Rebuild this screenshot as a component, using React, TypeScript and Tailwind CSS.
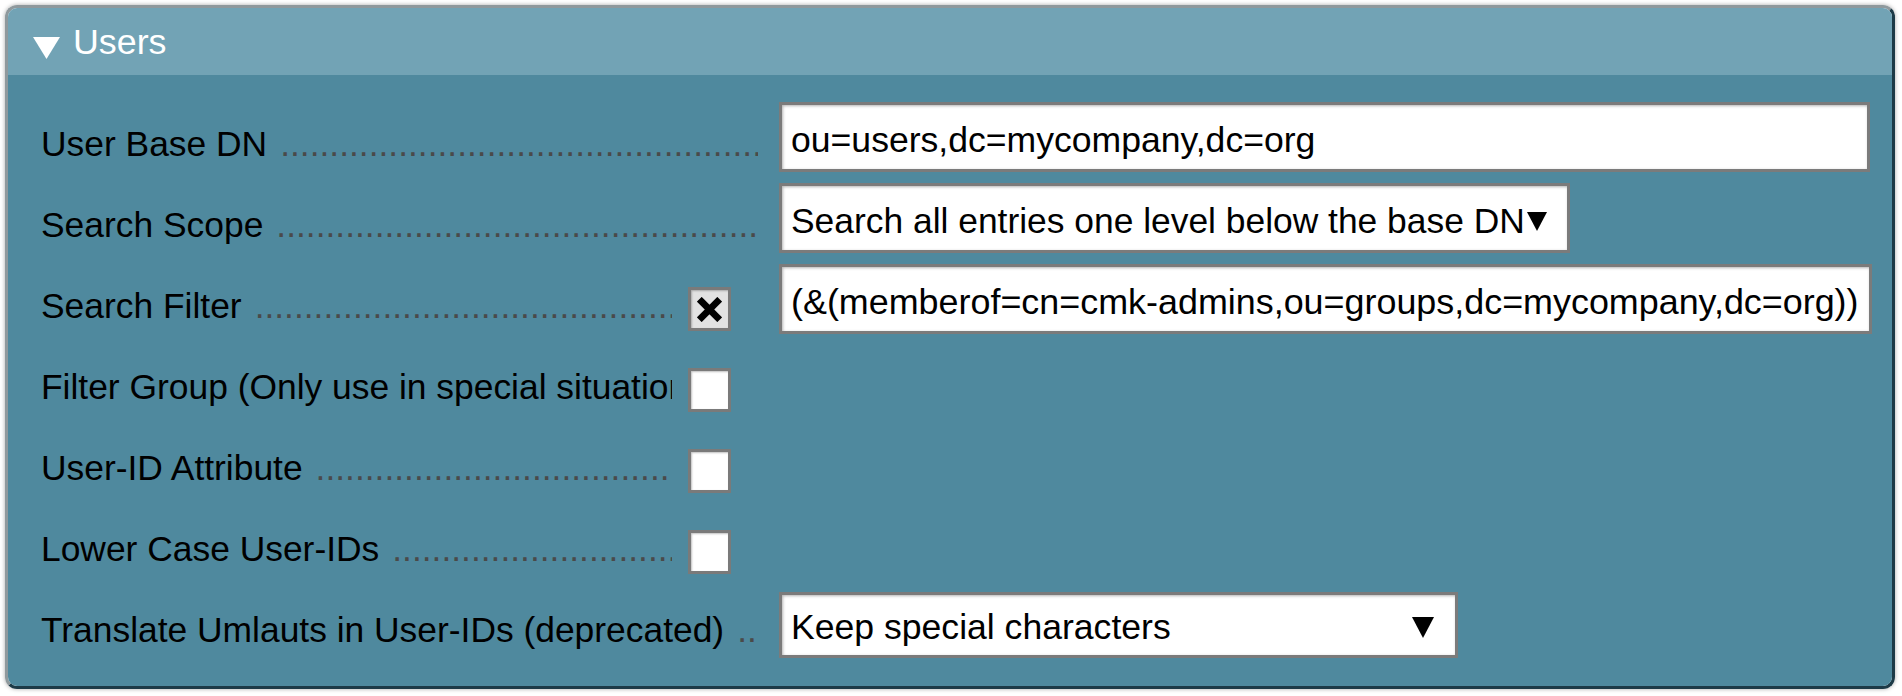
import React from "react";

type Row =
  | { kind: "input"; label: string; value: string; width: string }
  | { kind: "select"; label: string; value: string }
  | { kind: "check"; label: string; checked: boolean; value?: string }
  | { kind: "select2"; label: string; value: string };

const DOTS = ".".repeat(120);

const rows: Row[] = [
  { kind: "input", label: "User Base DN", value: "ou=users,dc=mycompany,dc=org", width: "w-[1091px]" },
  { kind: "select", label: "Search Scope", value: "Search all entries one level below the base DN" },
  {
    kind: "check",
    label: "Search Filter",
    checked: true,
    value: "(&(memberof=cn=cmk-admins,ou=groups,dc=mycompany,dc=org))",
  },
  { kind: "check", label: "Filter Group (Only use in special situations)", checked: false },
  { kind: "check", label: "User-ID Attribute", checked: false },
  { kind: "check", label: "Lower Case User-IDs", checked: false },
  { kind: "select2", label: "Translate Umlauts in User-IDs (deprecated)", value: "Keep special characters" },
];

function Arrow({ className }: { className: string }) {
  return (
    <svg viewBox="0 0 20 19" className={className}>
      <polygon points="0,0 20,0 10,19" fill="black" />
    </svg>
  );
}

function Label({ text, width }: { text: string; width: string }) {
  return (
    <div className={`${width} pt-[22px] flex overflow-hidden whitespace-nowrap leading-[40px] text-[35.4px]`}>
      <span className="text-black shrink-0">{text}</span>
      <span className="pl-[13px] text-[#4a4a4a]">{DOTS}</span>
    </div>
  );
}

function Checkbox({ checked }: { checked: boolean }) {
  return (
    <div
      className={`ml-[16px] mt-[23px] w-[43px] h-[44px] shrink-0 border-[3px] border-[#7a7a7a] flex items-center justify-center shadow-[inset_1px_1px_2px_rgba(0,0,0,0.25)] ${
        checked ? "bg-[#e2e2e2]" : "bg-white"
      }`}
    >
      {checked && (
        <svg viewBox="0 0 24 24" className="w-[25px] h-[25px]">
          <path d="M4.5 4.5 L19.5 19.5 M19.5 4.5 L4.5 19.5" stroke="black" strokeWidth="6.5" strokeLinecap="square" />
        </svg>
      )}
    </div>
  );
}

const boxClass =
  "h-[70px] border-[3px] border-[#7b7b7b] bg-white pl-[9px] pt-[15px] leading-[40px] text-black whitespace-nowrap overflow-hidden shadow-[inset_1px_1px_3px_rgba(0,0,0,0.3)]";

export default function App() {
  return (
    <div className="w-[1902px] h-[696px] bg-white p-[5px] font-['Liberation_Sans',Arial,sans-serif] text-[35.6px]">
      <div className="w-[1890px] h-[684px] rounded-[12px] border-[3px] border-t-[#8f999d] border-l-[#8f999d] border-r-[#1d3a47] border-b-[#1d3a47] overflow-hidden shadow-[0_0_4px_rgba(0,0,0,0.35)] flex flex-col">
        <div className="h-[67px] bg-[#72a3b5] flex items-center pl-[25px] shrink-0">
          <svg viewBox="0 0 27 22" className="w-[27px] h-[22px] mt-[13px]">
            <polygon points="0,0 27,0 13.5,22" fill="white" />
          </svg>
          <span className="ml-[13px] text-white leading-[40px] text-[35.8px]">Users</span>
        </div>
        <div className="flex-1 bg-[#4f899e] pt-[27px] pl-[33px]">
          {rows.map((r) => (
            <div key={r.label} className="h-[81px] flex items-start">
              <div className="w-[738px] flex items-start shrink-0">
                {r.kind === "check" ? (
                  <>
                    <Label text={r.label} width="w-[631px]" />
                    <Checkbox checked={r.checked} />
                  </>
                ) : (
                  <Label text={r.label} width="w-[717px]" />
                )}
              </div>
              {r.kind === "input" && <div className={`${boxClass} ${r.width}`}>{r.value}</div>}
              {r.kind === "check" && r.value && (
                <div className={`${boxClass} w-[1093px] text-[35.9px]`}>{r.value}</div>
              )}
              {r.kind === "select" && (
                <div className={`${boxClass} w-[791px] flex items-start text-[35.4px]`}>
                  <span>{r.value}</span>
                  <Arrow className="w-[20px] h-[19px] ml-[2px] mt-[11px] shrink-0" />
                </div>
              )}
              {r.kind === "select2" && (
                <div
                  className={`mt-[4px] h-[66px] w-[679px] border-[3px] border-[#7b7b7b] bg-white pl-[9px] pt-[12px] pr-[21px] leading-[40px] text-black flex items-start justify-between shadow-[inset_1px_1px_3px_rgba(0,0,0,0.3)]`}
                >
                  <span>{r.value}</span>
                  <Arrow className="w-[22px] h-[21px] mt-[10px]" />
                </div>
              )}
            </div>
          ))}
        </div>
      </div>
    </div>
  );
}
